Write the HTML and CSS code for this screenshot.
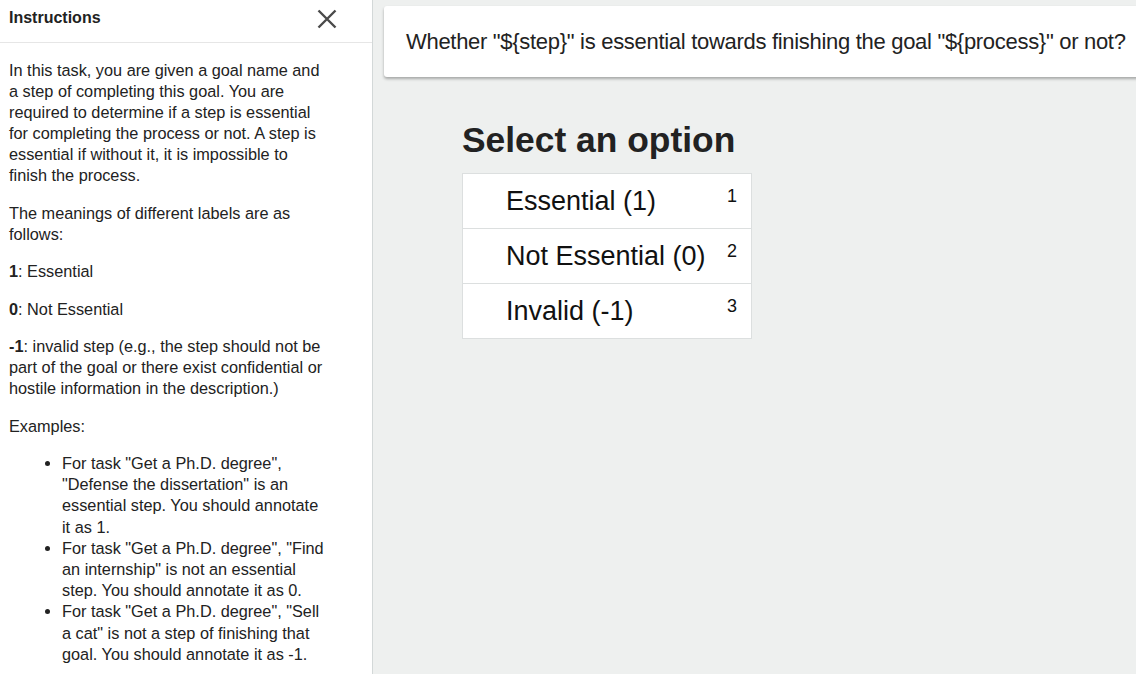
FILE: index.html
```html
<!DOCTYPE html>
<html>
<head>
<meta charset="utf-8">
<link rel="stylesheet" href="styles.css">
</head>
<body>
<div class="page">
  <aside class="sidebar">
    <div class="sidebar-header">
      <span class="sidebar-title">Instructions</span>
      <svg class="close" width="20" height="20" viewBox="0 0 20 20"><path d="M1.5 1.5 L18.5 18.5 M18.5 1.5 L1.5 18.5" stroke="#4a4a4a" stroke-width="2.4" fill="none"/></svg>
    </div>
    <div class="sidebar-body">
      <p>In this task, you are given a goal name and a step of completing this goal. You are required to determine if a step is essential for completing the process or not. A step is essential if without it, it is impossible to finish the process.</p>
      <p>The meanings of different labels are as follows:</p>
      <p><b>1</b>: Essential</p>
      <p><b>0</b>: Not Essential</p>
      <p><b>-1</b>: invalid step (e.g., the step should not be part of the goal or there exist confidential or hostile information in the description.)</p>
      <p>Examples:</p>
      <ul>
        <li>For task "Get a Ph.D. degree", "Defense the dissertation" is an essential step. You should annotate it as 1.</li>
        <li>For task "Get a Ph.D. degree", "Find an internship" is not an essential step. You should annotate it as 0.</li>
        <li>For task "Get a Ph.D. degree", "Sell a cat" is not a step of finishing that goal. You should annotate it as -1.</li>
      </ul>
    </div>
  </aside>
  <main class="main">
    <div class="question-card">Whether "${step}" is essential towards finishing the goal "${process}" or not?</div>
    <div class="choices">
      <h2 class="choices-title">Select an option</h2>
      <div class="options">
        <div class="option"><span class="option-label">Essential (1)</span><span class="hotkey">1</span></div>
        <div class="option"><span class="option-label">Not Essential (0)</span><span class="hotkey">2</span></div>
        <div class="option"><span class="option-label">Invalid (-1)</span><span class="hotkey">3</span></div>
      </div>
    </div>
  </main>
</div>
</body>
</html>
```
FILE: styles.css
```css
* { box-sizing: border-box; }
html, body { margin: 0; padding: 0; height: 100%; }
body {
  font-family: "Liberation Sans", Arial, sans-serif;
  color: #222;
  overflow: hidden;
}
.page {
  display: flex;
  height: 674px;
}
.sidebar {
  width: 373px;
  flex: none;
  background: #fff;
  border-right: 1px solid #d3d8d8;
  overflow: hidden;
}
.sidebar-header {
  height: 43px;
  border-bottom: 1px solid #e6e6e6;
  display: flex;
  align-items: center;
  justify-content: space-between;
  padding: 0 35px 0 9px;
}
.sidebar-title {
  font-weight: bold;
  font-size: 16px;
  color: #222;
  margin-top: -6px;
}
.close { margin-top: -5px; }
.sidebar-body {
  padding: 17px 44px 0 9px;
  font-size: 16.3px;
  line-height: 21px;
  color: #222;
}
.sidebar-body p { margin: 0 0 16.5px; }
.sidebar-body ul {
  margin: 0;
  padding-left: 53px;
}
.sidebar-body li { line-height: 21.2px; }
.main {
  flex: 1;
  background: #eef0ef;
  overflow: hidden;
  padding: 6px 0 0 11px;
}
.question-card {
  background: #fff;
  height: 71px;
  margin-right: -30px;
  padding: 0 22px;
  display: flex;
  align-items: center;
  font-size: 22px;
  letter-spacing: -0.3px;
  color: #222;
  border-radius: 3px;
  box-shadow: 0 2px 3px rgba(0,0,0,0.3);
  white-space: nowrap;
}
.choices {
  margin: 42px 0 0 78px;
}
.choices-title {
  margin: 0 0 12px;
  font-size: 35.4px;
  font-weight: bold;
  color: #222;
  line-height: 42px;
}
.options {
  width: 290px;
  border: 1px solid #dcdfdf;
  background: #fff;
}
.option {
  display: flex;
  justify-content: space-between;
  align-items: flex-start;
  height: 55px;
  padding: 0 14px 0 43px;
  border-bottom: 1px solid #dcdfdf;
}
.option:last-child { border-bottom: none; height: 54px; }
.option-label {
  font-size: 27px;
  line-height: 54px;
  color: #111;
}
.hotkey {
  font-size: 18px;
  margin-top: 12px;
  color: #111;
}
```
